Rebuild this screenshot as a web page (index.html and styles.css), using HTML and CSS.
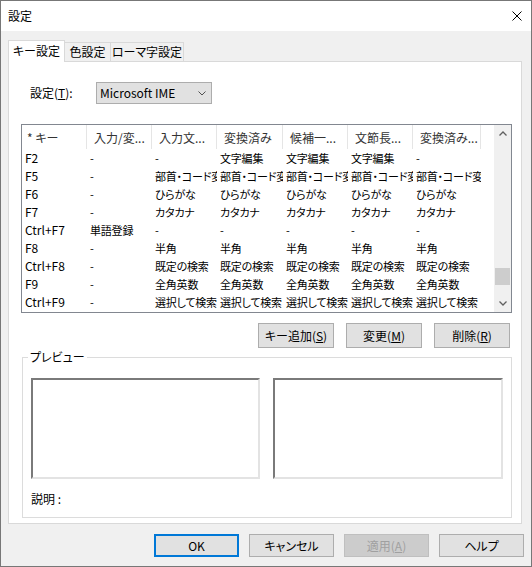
FILE: index.html
```html
<!DOCTYPE html>
<html lang="ja">
<head>
<meta charset="utf-8">
<title>設定</title>
<link rel="stylesheet" href="styles.css">
</head>
<body>
<div class="window">
  <div class="titlebar">
    <span class="title">設定</span>
    <svg class="close" width="10" height="10" viewBox="0 0 10 10"><path d="M0.5 0.5 L9.5 9.5 M9.5 0.5 L0.5 9.5" stroke="#000" stroke-width="1" fill="none"/></svg>
  </div>
  <div class="client">
    <div class="tabs">
      <div class="tab active t1">キー設定</div>
      <div class="tab t2">色設定</div>
      <div class="tab t3">ローマ字設定</div>
    </div>
    <div class="panel">
      <div class="setting-row">
        <span class="label">設定(<u>T</u>):</span>
        <div class="select">
          <span>Microsoft IME</span>
          <svg class="chev" width="8" height="5" viewBox="0 0 8 5"><path d="M0.5 0.5 L4 4 L7.5 0.5" stroke="#505050" stroke-width="1" fill="none"/></svg>
        </div>
      </div>
      <div class="listview">
        <div class="grid">
          <div class="row header">
            <div class="cell c0">* キー</div>
            <div class="cell c1">入力/変...</div>
            <div class="cell c2">入力文...</div>
            <div class="cell c3">変換済み</div>
            <div class="cell c4">候補一...</div>
            <div class="cell c5">文節長...</div>
            <div class="cell c6">変換済み...</div>
          </div>
          <div class="row"><div class="cell c0">F2</div><div class="cell c1">-</div><div class="cell c2">-</div><div class="cell c3">文字編集</div><div class="cell c4">文字編集</div><div class="cell c5">文字編集</div><div class="cell c6">-</div></div>
          <div class="row"><div class="cell c0">F5</div><div class="cell c1">-</div><div class="cell c2">部首・コード変</div><div class="cell c3">部首・コード変</div><div class="cell c4">部首・コード変</div><div class="cell c5">部首・コード変</div><div class="cell c6">部首・コード変</div></div>
          <div class="row"><div class="cell c0">F6</div><div class="cell c1">-</div><div class="cell c2">ひらがな</div><div class="cell c3">ひらがな</div><div class="cell c4">ひらがな</div><div class="cell c5">ひらがな</div><div class="cell c6">ひらがな</div></div>
          <div class="row"><div class="cell c0">F7</div><div class="cell c1">-</div><div class="cell c2">カタカナ</div><div class="cell c3">カタカナ</div><div class="cell c4">カタカナ</div><div class="cell c5">カタカナ</div><div class="cell c6">カタカナ</div></div>
          <div class="row"><div class="cell c0">Ctrl+F7</div><div class="cell c1">単語登録</div><div class="cell c2">-</div><div class="cell c3">-</div><div class="cell c4">-</div><div class="cell c5">-</div><div class="cell c6">-</div></div>
          <div class="row"><div class="cell c0">F8</div><div class="cell c1">-</div><div class="cell c2">半角</div><div class="cell c3">半角</div><div class="cell c4">半角</div><div class="cell c5">半角</div><div class="cell c6">半角</div></div>
          <div class="row"><div class="cell c0">Ctrl+F8</div><div class="cell c1">-</div><div class="cell c2">既定の検索</div><div class="cell c3">既定の検索</div><div class="cell c4">既定の検索</div><div class="cell c5">既定の検索</div><div class="cell c6">既定の検索</div></div>
          <div class="row"><div class="cell c0">F9</div><div class="cell c1">-</div><div class="cell c2">全角英数</div><div class="cell c3">全角英数</div><div class="cell c4">全角英数</div><div class="cell c5">全角英数</div><div class="cell c6">全角英数</div></div>
          <div class="row"><div class="cell c0">Ctrl+F9</div><div class="cell c1">-</div><div class="cell c2">選択して検索</div><div class="cell c3">選択して検索</div><div class="cell c4">選択して検索</div><div class="cell c5">選択して検索</div><div class="cell c6">選択して検索</div></div>
        </div>
        <div class="vscroll">
          <div class="arrow"><svg width="8" height="5" viewBox="0 0 8 5"><path d="M0.5 4.5 L4 1 L7.5 4.5" stroke="#606060" stroke-width="1.3" fill="none"/></svg></div>
          <div class="track"><div class="thumb"></div></div>
          <div class="arrow"><svg width="8" height="5" viewBox="0 0 8 5"><path d="M0.5 0.5 L4 4 L7.5 0.5" stroke="#606060" stroke-width="1.3" fill="none"/></svg></div>
        </div>
      </div>
      <div class="actions">
        <button class="btn small">キー追加(<u>S</u>)</button>
        <button class="btn small">変更(<u>M</u>)</button>
        <button class="btn small">削除(<u>R</u>)</button>
      </div>
      <fieldset class="preview">
        <legend>プレビュー</legend>
        <div class="boxes">
          <div class="box left"></div>
          <div class="box right"></div>
        </div>
        <div class="desc">説明 :</div>
      </fieldset>
    </div>
    <div class="dialog-buttons">
      <button class="btn big default">OK</button>
      <button class="btn big">キャンセル</button>
      <button class="btn big disabled">適用(<u>A</u>)</button>
      <button class="btn big">ヘルプ</button>
    </div>
  </div>
</div>
</body>
</html>
```
FILE: styles.css
```css
* { box-sizing: border-box; }
html, body { margin: 0; padding: 0; }
body {
  width: 532px;
  height: 567px;
  overflow: hidden;
  font-family: "Noto Sans CJK JP", "Noto Sans", sans-serif;
  font-size: 12px;
  line-height: 16px;
  color: #000;
  font-feature-settings: "palt";
}
.window {
  width: 532px;
  height: 567px;
  border: 1px solid #777;
  background: #f0f0f0;
  display: flex;
  flex-direction: column;
}
.titlebar {
  height: 30px;
  background: #fff;
  display: flex;
  align-items: center;
  justify-content: space-between;
  padding: 0 9px 0 7px;
  flex: none;
}
.title { font-size: 12px; }
.close { display: block; }
.client {
  flex: 1;
  padding: 9px 7px 0 7px;
}
.tabs {
  display: flex;
  align-items: flex-end;
  height: 21px;
}
.tab {
  height: 19px;
  border: 1px solid #d9d9d9;
  border-bottom: none;
  background: #f0f0f0;
  display: flex;
  align-items: center;
  justify-content: center;
  margin-left: -1px;
  white-space: nowrap;
}
.tab.active {
  height: 22px;
  margin-bottom: -1px;
  margin-left: 0;
  background: #fff;
  position: relative;
  z-index: 1;
  padding-bottom: 1px;
}
.t1 { width: 57px; }
.t2 { width: 47px; }
.t3 { width: 74px; }
.panel {
  width: 514px;
  height: 463px;
  border: 1px solid #d9d9d9;
  background: #fff;
  padding-top: 20px;
}
.setting-row {
  display: flex;
  align-items: center;
  height: 22px;
  padding-left: 21px;
}
.label { width: 66px; }
.select {
  width: 116px;
  height: 22px;
  border: 1px solid #adadad;
  background: #e1e1e1;
  display: flex;
  align-items: center;
  justify-content: space-between;
  padding: 0 5px 0 3px;
}
.chev { display: block; }
.listview {
  margin: 20px 0 0 12px;
  width: 491px;
  height: 189px;
  border: 1px solid #828790;
  display: flex;
}
.grid {
  flex: 1;
  overflow: hidden;
}
.row {
  display: flex;
  height: 18px;
  line-height: 18px;
}
.cell {
  flex: none;
  width: 65px;
  overflow: hidden;
  white-space: nowrap;
  padding-left: 3px;
  font-size: 11px;
  letter-spacing: -0.2px;
}
.row .c0 { font-size: 12px; letter-spacing: 0; }
.c3 { width: 66px; }
.c6 { width: 68px; }
.row.header {
  height: 24px;
  line-height: 16px;
  color: #333;
}
.row.header .cell {
  padding: 5px 0 0 7px;
  border-right: 1px solid #e5e5e5;
  font-size: 12px;
  letter-spacing: 0;
}
.row.header .c0 { padding-left: 5px; }
.vscroll {
  width: 17px;
  flex: none;
  background: #f0f0f0;
  display: flex;
  flex-direction: column;
}
.arrow {
  height: 17px;
  display: flex;
  align-items: center;
  justify-content: center;
}
.arrow svg { display: block; }
.track { flex: 1; }
.thumb {
  margin: 126px 1px 0 1px;
  height: 17px;
  background: #cdcdcd;
}
.actions {
  display: flex;
  justify-content: flex-end;
  gap: 12px;
  margin-top: 10px;
  padding-right: 11px;
}
.btn {
  font-family: inherit;
  font-size: 12px;
  line-height: 16px;
  color: #000;
  background: #e1e1e1;
  border: 1px solid #adadad;
  padding: 0;
  margin: 0;
  font-feature-settings: "palt";
}
.btn.small { width: 76px; height: 25px; }
.btn.big { width: 85px; height: 23px; }
.btn.default { border: 2px solid #0078d7; }
.btn.disabled {
  background: #cccccc;
  border-color: #bfbfbf;
  color: #a0a0a0;
}
.preview {
  margin: 1px 0 0 13px;
  width: 490px;
  min-inline-size: 0;
  border: 1px solid #dcdcdc;
  padding: 13px 8px 10px 8px;
}
.preview legend {
  padding: 0 2px;
  margin-left: -3px;
  line-height: 16px;
}
.boxes {
  display: flex;
  gap: 13px;
}
.box {
  height: 101px;
  background: #fff;
  border-width: 2px;
  border-style: solid;
  border-color: #7a7a7a #e3e3e3 #e3e3e3 #7a7a7a;
}
.box.left { width: 229px; }
.box.right { width: 230px; }
.desc { margin-top: 12px; }
.dialog-buttons {
  display: flex;
  justify-content: flex-end;
  gap: 10px;
  margin-top: 10px;
}
```
